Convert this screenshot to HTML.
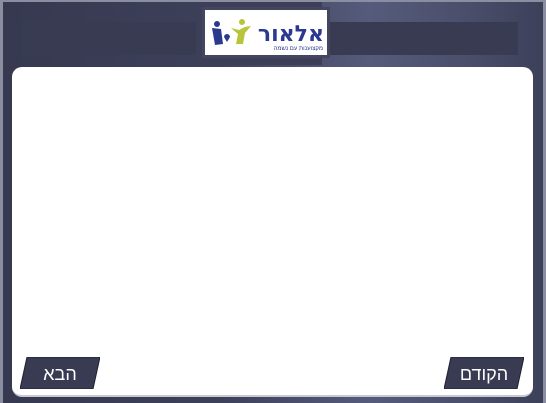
<!DOCTYPE html>
<html><head><meta charset="utf-8"><style>
html,body{margin:0;padding:0}
body{width:546px;height:403px;overflow:hidden;position:relative;background:#8a8ea0;font-family:"Liberation Sans","DejaVu Sans",sans-serif}
.frame{position:absolute;left:3px;top:2px;right:3px;bottom:0;background:linear-gradient(90deg,#363950 0%,#3d4059 40%,#555b7b 68%,#4a4f6c 85%,#3d4059 100%)}
.band{position:absolute;left:197px;top:2px;width:125px;height:63px;background:#3c3f57}
.bar{position:absolute;top:22px;height:33px;background:#383b52}
.logo{position:absolute;left:205px;top:10px;width:122px;height:45px;background:#fff;box-shadow:0 0 0 3px #43465e}
.panel{position:absolute;left:12px;top:67px;width:521px;height:328px;background:#fff;border-radius:10px;border-bottom:2px solid #c8cad3}
.btn{position:absolute;top:357px;width:80px;height:32px}
.btn svg{position:absolute;left:0;top:0}
.btn span{position:absolute;left:0;right:0;top:7px;text-align:center;color:#fff;font-size:18px;font-family:"Liberation Sans","DejaVu Sans",sans-serif}
</style></head><body>
<div class="frame"></div>
<div class="band"></div>
<div class="bar" style="left:22px;width:174px"></div>
<div class="bar" style="left:322px;width:196px"></div>
<div class="logo">
<svg width="122" height="45" viewBox="0 0 122 45">
<circle cx="12" cy="14" r="3" fill="#2b3a8f"/>
<path d="M7 18 L16 19 L18 34 L10 35 Z" fill="#2b3a8f"/>
<path d="M19 27 a3 3 0 0 1 6 0 l-3 5 z" fill="#2b3a8f"/>
<circle cx="37" cy="12" r="3" fill="#b8c43a"/>
<path d="M26 18 L34 20 L40 17 L46 16 L40 23 L38 34 L31 34 L33 24 Z" fill="#b8c43a"/>
<text x="119" y="31" text-anchor="end" font-size="22" font-weight="bold" fill="#2b3a8f" font-family="DejaVu Sans, sans-serif" style="font-weight:900">אלאור</text>
<text x="118" y="40" text-anchor="end" font-size="6" fill="#2b3a8f" font-family="Liberation Sans, DejaVu Sans, sans-serif">מקצוענות עם נשמה</text>
</svg>
</div>
<div class="panel"></div>
<div class="btn" style="left:20px">
<svg width="80" height="32"><polygon points="7,0 80,0 73,32 0,32" fill="#383b52" stroke="#202230" stroke-width="1"/></svg>
<span>הבא</span></div>
<div class="btn" style="left:444px">
<svg width="80" height="32"><polygon points="7,0 80,0 73,32 0,32" fill="#383b52" stroke="#202230" stroke-width="1"/></svg>
<span>הקודם</span></div>
</body></html>
